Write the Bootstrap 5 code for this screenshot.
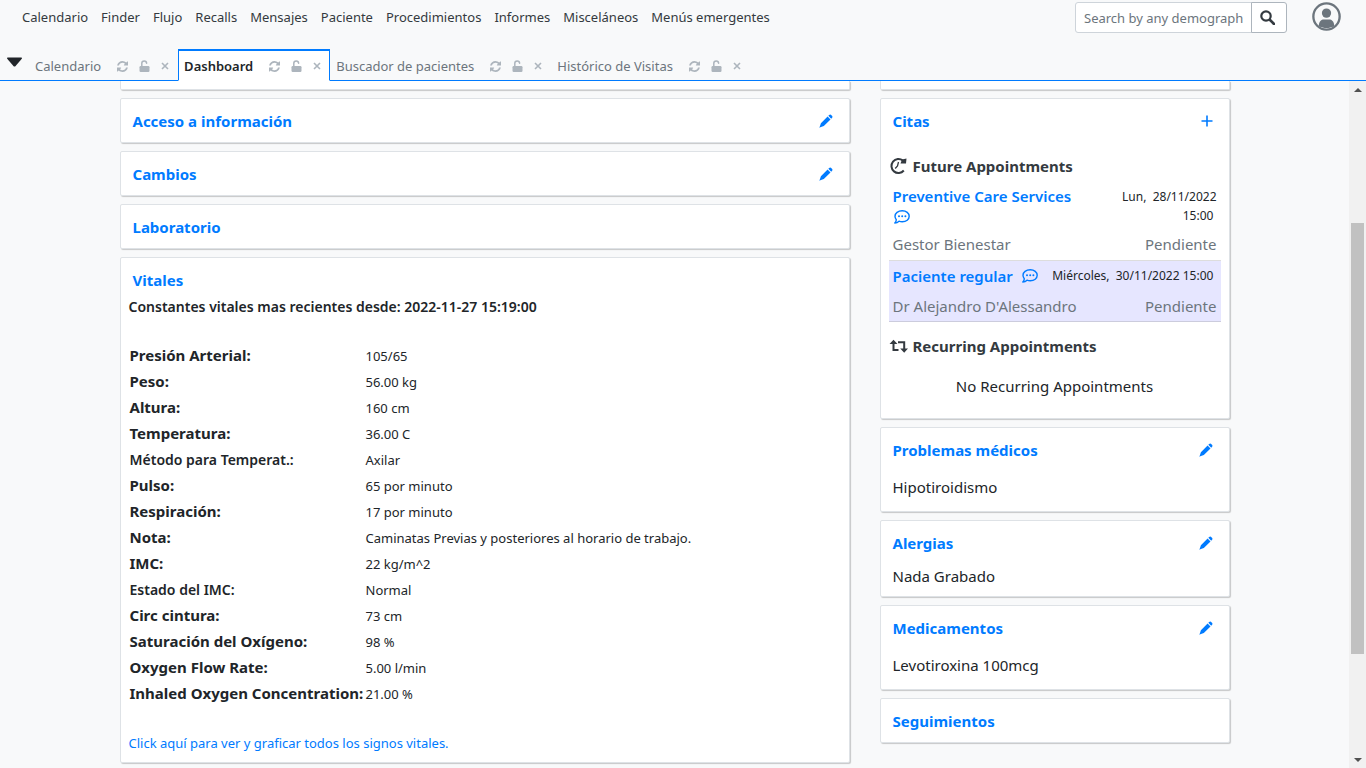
<!DOCTYPE html>
<html lang="es">
<head>
<meta charset="utf-8">
<meta name="viewport" content="width=device-width, initial-scale=1">
<title>Dashboard</title>
<link href="https://cdn.jsdelivr.net/npm/bootstrap@5.3.0/dist/css/bootstrap.min.css" rel="stylesheet">
<style>
  :root { --blue: #007bff; --ink: #212529; --muted: #6c757d; --pale: #adb5bd; }
  body { font-family: "Noto Sans", "Open Sans", sans-serif; font-size: 15px; line-height: 24px; color: var(--ink); background: #f8f9fa; }
  a { color: var(--blue); text-decoration: none; }
  svg { fill: currentColor; display: block; flex: none; }

  .bare { border: 0; background: none; padding: 0; color: inherit; }
  .top-row { height: 49px; padding: 2px 24px 0 22px; }
  .main-menu { gap: 13px; font-size: 13px; line-height: 30px; }
  .main-menu a { color: #343a40; }
  .search-box { width: 212px; }
  .search-box .form-control, .search-box .btn { height: 31px; font-size: 13px; border-color: #ced4da; padding: 4px 8px; border-radius: 3px; }
  .search-box .form-control::placeholder { color: var(--muted); }
  .search-box .btn { width: 36px; background: #fff; border-color: #adb5bd; padding: 0 8px; }
  .user-btn { margin-left: 24px; color: var(--muted); }

  .tab-row { height: 32px; border-bottom: 1px solid var(--blue); font-size: 13px; padding-left: 6px; }
  .caret-btn { width: 17px; margin: 0 6px 6px 0; }
  .page-tab { height: 32px; padding: 1px 8px 0 5px; border: 1px solid transparent; border-top-width: 2px; color: var(--pale); gap: 11px; }
  .page-tab a { color: var(--muted); margin-right: 5px; }
  .page-tab.current { background: #fff; border-color: var(--blue); border-bottom-color: #fff; }
  .page-tab.current a { color: var(--ink); font-weight: 600; }

  .board, .board .row { --bs-gutter-x: 30px; }
  .panel { background: #fff; border: 1px solid #dee2e6; border-radius: 2px; box-shadow: 1px 1px 1px rgba(0,0,0,.2); margin-bottom: 8px; padding: 0 8px; }
  .panel-cut { height: 9px; border-top: 0; border-radius: 0 0 2px 2px; }
  .panel-head { padding: 10px 8px 9px 4px; }
  .panel-head h2 { font-size: 15px; line-height: 24px; font-weight: 700; color: var(--blue); margin: 0; }
  .panel-head a { color: var(--blue); }
  .tight { padding-bottom: 4px; }
  .spaced-text { padding: 4px 4px 12px; margin: 0; }
  .close-text { padding: 0 4px 8px; margin: 0; }

  .vital-text { font-size: 13px; line-height: 21px; margin: 0; }
  .vital-lead { font-size: 14px; font-weight: 600; line-height: 21px; margin: 0 0 25px; }
  .vital-table { margin-bottom: 27px; }
  .vital-table th, .vital-table td { height: 26px; padding: 0 1px; line-height: 24px; }
  .vital-table th { font-weight: 700; width: 236px; white-space: nowrap; }
  .vital-table th.minor { font-size: 14px; font-weight: 600; padding-top: 1px; }
  .vital-table td { font-size: 13px; padding-top: 1px; }

  .appt-title { font-size: 15px; line-height: 24px; font-weight: 700; color: #343a40; gap: 5px; margin: 12px 0 0; }
  .appt { padding: 3px 4px; border: solid #ddd; border-width: 1px 0; }
  .appt-foot { color: var(--muted); margin-top: 6px; }
  .appt-name { font-weight: 600; line-height: 19px; }
  .appt-date { font-size: 12px; line-height: 19px; }
  .appt-first { border-color: transparent; padding: 8px 4px 4px; border-bottom: 0; }
  .appt-first .appt-date { width: 110px; }
  .appt-first .appt-foot { margin-top: 7px; }
  .appt-next { background: #e6e6ff; border-bottom-color: #ccccdd; }
  .appt-next .appt-name, .appt-next .appt-date { line-height: 24px; }
  .none-text { margin: 16px 0 20px; }

  .scroll-rail { width: 17px; background: #f1f1f1; }
  .scroll-rail button { height: 17px; }
  .rail-thumb { background: #c1c1c1; margin: 0 2px; flex: 431 1 0; }
  .rail-before { flex: 125 1 0; }
  .rail-after { flex: 97 1 0; }
</style>
</head>
<body class="vh-100 d-flex flex-column overflow-hidden">

<svg width="0" height="0" class="position-absolute" aria-hidden="true">
  <symbol id="i-sync" viewBox="0 128 1536 1536"><path d="M1511 1056q0 5-1 7-64 268-268 434.5t-478 166.5q-146 0-282.5-55t-243.5-157l-129 129q-19 19-45 19t-45-19-19-45v-448q0-26 19-45t45-19h448q26 0 45 19t19 45-19 45l-137 137q71 66 161 102t187 36q134 0 250-65t186-179q11-17 53-117 8-23 30-23h192q13 0 22.5 9.5t9.5 22.5zm25-800v448q0 26-19 45t-45 19h-448q-26 0-45-19t-19-45 19-45l138-138q-148-137-349-137-134 0-250 65t-186 179q-11 17-53 117-8 23-30 23h-199q-13 0-22.5-9.5t-9.5-22.5v-7q65-268 270-434.5t480-166.5q146 0 284 55.5t245 156.5l130-129q19-19 45-19t45 19 19 45z"/></symbol>
  <symbol id="i-lock" viewBox="0 0 11 12"><rect x=".5" y="6" width="10" height="6" rx="1.200"/><path d="M2.800 7V3.300a2.400 2.400 0 0 1 4.800 0" fill="none" stroke="currentColor" stroke-width="1.500" stroke-linecap="round"/></symbol>
  <symbol id="i-close" viewBox="0 0 8 8"><path d="M1 1l6 6M7 1l-6 6" fill="none" stroke="currentColor" stroke-width="1.600"/></symbol>
  <symbol id="i-pencil" viewBox="0 0 14 14"><path d="M10.200 .9Q11 .1 11.900 .8L13.200 2.100Q13.900 3 13.100 3.800L12.200 4.700L9.300 1.800ZM8.600 2.500L11.500 5.400L4.800 12.100L2 13L1 12L1.900 9.200ZM1.200 11.500L2.500 12.800L.3 13.700Z"/></symbol>
  <symbol id="i-comment" viewBox="0 0 16 14"><path d="M8.200 .8C12.300 .8 15.200 3.200 15.200 6.300S12.300 11.800 8.200 11.800C7 11.800 6 11.600 5 11.200C4 12.200 2.500 13 .8 13C1.700 12.100 2.300 11 2.300 9.700C1.500 8.800 1 7.600 1 6.300C1 3.200 4.100 .8 8.200 .8Z" fill="none" stroke="currentColor" stroke-width="1.400" stroke-linejoin="round"/><circle cx="5" cy="6.300" r="1"/><circle cx="8.200" cy="6.300" r="1"/><circle cx="11.400" cy="6.300" r="1"/></symbol>
</svg>

<header>
  <div class="top-row d-flex align-items-start">
    <nav class="main-menu d-flex flex-grow-1 text-nowrap" aria-label="Principal">
      <a href="#">Calendario</a><a href="#">Finder</a><a href="#">Flujo</a><a href="#">Recalls</a><a href="#">Mensajes</a><a href="#">Paciente</a><a href="#">Procedimientos</a><a href="#">Informes</a><a href="#">Misceláneos</a><a href="#">Menús emergentes</a>
    </nav>
    <form class="search-box input-group flex-nowrap">
      <input type="text" class="form-control" placeholder="Search by any demographics" aria-label="Search by any demographics">
      <button type="button" class="btn d-flex align-items-center" aria-label="Search"><svg width="15" height="15" viewBox="0 0 15 15"><path d="M10 10l4 4" stroke="#343a40" stroke-width="2.600" stroke-linecap="round"/><circle cx="6" cy="6" r="4.700" fill="none" stroke="#343a40" stroke-width="2.200"/></svg></button>
    </form>
    <button type="button" class="bare user-btn" aria-label="Usuario"><svg width="31" height="29" viewBox="0 0 30 30"><circle cx="15" cy="15" r="13.600" fill="none" stroke="currentColor" stroke-width="2.400"/><circle cx="15" cy="11.500" r="4.800"/><path d="M7 25C7 19.500 10 18 12 18h6C20 18 23 19.500 23 25C18 27.500 12 27.500 7 25Z"/></svg></button>
  </div>

  <div class="tab-row d-flex text-nowrap">
    <button type="button" class="bare caret-btn" aria-label="Lista de pestañas"><svg width="17" height="10" viewBox="0 0 17 10"><path d="M2 .5h13q1.500 0 .8 1.200L9.600 9q-1.100 1-2.200 0L1.200 1.700Q.5 .5 2 .5Z"/></svg></button>
    <div class="page-tab d-flex align-items-center"><a href="#">Calendario</a><svg width="11" height="11"><use href="#i-sync"/></svg><svg width="11" height="12"><use href="#i-lock"/></svg><svg width="8" height="8"><use href="#i-close"/></svg></div>
    <div class="page-tab current d-flex align-items-center"><a href="#" aria-current="page">Dashboard</a><svg width="11" height="11"><use href="#i-sync"/></svg><svg width="11" height="12"><use href="#i-lock"/></svg><svg width="8" height="8"><use href="#i-close"/></svg></div>
    <div class="page-tab d-flex align-items-center"><a href="#">Buscador de pacientes</a><svg width="11" height="11"><use href="#i-sync"/></svg><svg width="11" height="12"><use href="#i-lock"/></svg><svg width="8" height="8"><use href="#i-close"/></svg></div>
    <div class="page-tab d-flex align-items-center"><a href="#">Histórico de Visitas</a><svg width="11" height="11"><use href="#i-sync"/></svg><svg width="11" height="12"><use href="#i-lock"/></svg><svg width="8" height="8"><use href="#i-close"/></svg></div>
  </div>
</header>

<div class="d-flex flex-grow-1 overflow-hidden">
  <main class="flex-grow-1 overflow-hidden">
    <div class="container board">
      <div class="row">
        <div class="col-md-8">
          <div class="panel panel-cut"></div>
          <section class="panel"><div class="panel-head d-flex align-items-center justify-content-between"><h2>Acceso a información</h2><a href="#" aria-label="Editar"><svg width="14" height="14"><use href="#i-pencil"/></svg></a></div></section>
          <section class="panel"><div class="panel-head d-flex align-items-center justify-content-between"><h2>Cambios</h2><a href="#" aria-label="Editar"><svg width="14" height="14"><use href="#i-pencil"/></svg></a></div></section>
          <section class="panel"><div class="panel-head"><h2>Laboratorio</h2></div></section>
          <section class="panel pb-2">
            <div class="panel-head tight"><h2>Vitales</h2></div>
            <p class="vital-lead">Constantes vitales mas recientes desde: 2022-11-27 15:19:00</p>
            <table class="vital-table w-100">
              <tr><th scope="row">Presión Arterial:</th><td>105/65</td></tr>
              <tr><th scope="row">Peso:</th><td>56.00 kg</td></tr>
              <tr><th scope="row">Altura:</th><td>160 cm</td></tr>
              <tr><th scope="row">Temperatura:</th><td>36.00 C</td></tr>
              <tr><th scope="row" class="minor">Método para Temperat.:</th><td>Axilar</td></tr>
              <tr><th scope="row">Pulso:</th><td>65 por minuto</td></tr>
              <tr><th scope="row">Respiración:</th><td>17 por minuto</td></tr>
              <tr><th scope="row">Nota:</th><td>Caminatas Previas y posteriores al horario de trabajo.</td></tr>
              <tr><th scope="row">IMC:</th><td>22 kg/m^2</td></tr>
              <tr><th scope="row" class="minor">Estado del IMC:</th><td>Normal</td></tr>
              <tr><th scope="row">Circ cintura:</th><td>73 cm</td></tr>
              <tr><th scope="row">Saturación del Oxígeno:</th><td>98 %</td></tr>
              <tr><th scope="row">Oxygen Flow Rate:</th><td>5.00 l/min</td></tr>
              <tr><th scope="row">Inhaled Oxygen Concentration:</th><td>21.00 %</td></tr>
            </table>
            <p class="vital-text"><a href="#">Click aquí para ver y graficar todos los signos vitales.</a></p>
          </section>
        </div>

        <div class="col-md-4">
          <div class="panel panel-cut"></div>
          <section class="panel">
            <div class="panel-head d-flex align-items-center justify-content-between"><h2>Citas</h2><a href="#" aria-label="Añadir"><svg width="12" height="12" viewBox="0 0 12 12"><path d="M6 .5v11M.5 6h11" stroke="currentColor" stroke-width="1.600"/></svg></a></div>
            <h3 class="appt-title d-flex align-items-center"><svg width="19" height="18" viewBox="0 0 19 18"><path d="M14.800 13.500A7 7 0 1 1 13.800 3.500" fill="none" stroke="currentColor" stroke-width="2"/><path d="M11.500 6.500L13 2.500L17.500 1.500L17 6.500Z"/><path d="M9.500 5L8.500 9L6.200 11.500" fill="none" stroke="currentColor" stroke-width="1.300"/></svg>Future Appointments</h3>
            <div class="appt appt-first">
              <div class="d-flex justify-content-between">
                <div class="appt-name"><a href="#">Preventive Care Services<svg class="mt-1" width="18" height="14"><use href="#i-comment"/></svg></a></div>
                <div class="appt-date text-end">Lun,&nbsp; 28/11/2022 15:00&nbsp;</div>
              </div>
              <div class="appt-foot d-flex justify-content-between"><span>Gestor Bienestar</span><span>Pendiente</span></div>
            </div>
            <div class="appt appt-next">
              <div class="d-flex justify-content-between">
                <a href="#" class="appt-name d-flex align-items-center gap-2">Paciente regular<svg width="18" height="14"><use href="#i-comment"/></svg></a>
                <div class="appt-date text-end">Miércoles,&nbsp; 30/11/2022 15:00&nbsp;</div>
              </div>
              <div class="appt-foot d-flex justify-content-between"><span>Dr Alejandro D'Alessandro</span><span>Pendiente</span></div>
            </div>
            <h3 class="appt-title d-flex align-items-center"><svg width="19" height="14" viewBox="0 0 19 14"><path d="M4.500 3.500V11.100H9.500M9 3.200h6.200V11" fill="none" stroke="currentColor" stroke-width="2"/><path d="M.5 5L4.500 .8L8.500 5ZM11.200 9.500L15.200 13.700L19 9.500Z"/></svg>Recurring Appointments</h3>
            <p class="none-text text-center">No Recurring Appointments</p>
          </section>
          <section class="panel"><div class="panel-head d-flex align-items-center justify-content-between"><h2>Problemas médicos</h2><a href="#" aria-label="Editar"><svg width="14" height="14"><use href="#i-pencil"/></svg></a></div><p class="spaced-text">Hipotiroidismo</p></section>
          <section class="panel"><div class="panel-head d-flex align-items-center justify-content-between"><h2>Alergias</h2><a href="#" aria-label="Editar"><svg width="14" height="14"><use href="#i-pencil"/></svg></a></div><p class="close-text">Nada Grabado</p></section>
          <section class="panel"><div class="panel-head d-flex align-items-center justify-content-between"><h2>Medicamentos</h2><a href="#" aria-label="Editar"><svg width="14" height="14"><use href="#i-pencil"/></svg></a></div><p class="spaced-text">Levotiroxina 100mcg</p></section>
          <section class="panel"><div class="panel-head"><h2>Seguimientos</h2></div></section>
        </div>
      </div>
    </div>
  </main>
  <aside class="scroll-rail d-flex flex-column flex-shrink-0" aria-label="Desplazamiento">
    <button type="button" class="bare d-flex align-items-center justify-content-center" aria-label="Subir"><svg width="8" height="4" viewBox="0 0 8 4"><path d="M0 4L4 0L8 4Z" fill="#505050"/></svg></button>
    <div class="rail-before"></div><div class="rail-thumb"></div><div class="rail-after"></div>
    <button type="button" class="bare d-flex align-items-center justify-content-center" aria-label="Bajar"><svg width="8" height="4" viewBox="0 0 8 4"><path d="M0 0L4 4L8 0Z" fill="#505050"/></svg></button>
  </aside>
</div>
<script src="https://cdn.jsdelivr.net/npm/bootstrap@5.3.0/dist/js/bootstrap.bundle.min.js"></script>
</body>
</html>
